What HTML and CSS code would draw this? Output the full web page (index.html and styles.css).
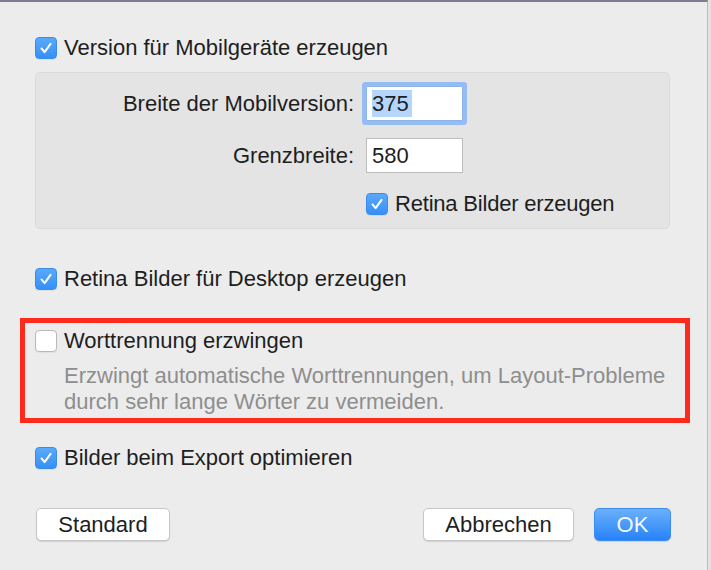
FILE: index.html
```html
<!DOCTYPE html>
<html lang="de">
<head>
  <meta charset="UTF-8" />
  <title>Exporteinstellungen</title>
  <link rel="stylesheet" href="styles.css">
</head>
<body>
  <div class="window">
    <div class="check-row">
      <span class="checkbox checked">
        <svg viewBox="0 0 22 22"><path d="M6 11.5 L9.5 15.5 L16 6.5" /></svg>
      </span>
      <span>Version für Mobilgeräte erzeugen</span>
    </div>

    <div class="group">
      <label class="field-label">Breite der Mobilversion:</label>
      <div class="textfield focused"><span class="selected">375</span></div>

      <label class="field-label">Grenzbreite:</label>
      <div class="textfield">580</div>

      <div class="check-row group-check">
        <span class="checkbox checked">
          <svg viewBox="0 0 22 22"><path d="M6 11.5 L9.5 15.5 L16 6.5" /></svg>
        </span>
        <span>Retina Bilder erzeugen</span>
      </div>
    </div>

    <div class="check-row spaced">
      <span class="checkbox checked">
        <svg viewBox="0 0 22 22"><path d="M6 11.5 L9.5 15.5 L16 6.5" /></svg>
      </span>
      <span>Retina Bilder für Desktop erzeugen</span>
    </div>

    <div class="highlight">
      <div class="check-row">
        <span class="checkbox"></span>
        <span>Worttrennung erzwingen</span>
      </div>
      <p class="hint">Erzwingt automatische Worttrennungen, um Layout-Probleme<br>durch sehr lange Wörter zu vermeiden.</p>
    </div>

    <div class="check-row after-highlight">
      <span class="checkbox checked">
        <svg viewBox="0 0 22 22"><path d="M6 11.5 L9.5 15.5 L16 6.5" /></svg>
      </span>
      <span>Bilder beim Export optimieren</span>
    </div>

    <div class="buttons">
      <button class="btn btn-standard">Standard</button>
      <div class="spacer"></div>
      <button class="btn btn-cancel">Abbrechen</button>
      <button class="btn btn-ok">OK</button>
    </div>
  </div>
</body>
</html>
```

FILE: styles.css
```css
body {
  margin: 0;
  background: #e2e2e2;
  font-family: "Liberation Sans", Arial, sans-serif;
  font-size: 22px;
  color: #1e1e1e;
}
.window {
  width: 635px;
  height: 536px;
  padding: 33px 37px 0 35px;
  background: #ececec;
  border-top: 2px solid #7e7c8f;
  border-right: 1px solid #bcbcbc;
}
.check-row {
  display: flex;
  align-items: center;
  gap: 7px;
  height: 26px;
  line-height: 26px;
  white-space: nowrap;
}
.checkbox {
  width: 22px;
  height: 22px;
  box-sizing: border-box;
  border-radius: 4px;
  background: #fff;
  border: 1px solid #b9b9b9;
  box-shadow: 0 1px 1px rgba(0,0,0,0.06);
  flex-shrink: 0;
}
.checkbox.checked {
  background: linear-gradient(#5aa9fb, #3590f6);
  border: 1px solid #3a8cec;
}
.checkbox svg {
  display: block;
  width: 20px;
  height: 20px;
  fill: none;
  stroke: #fff;
  stroke-width: 2.2;
  stroke-linecap: round;
  stroke-linejoin: round;
}
.group {
  margin-top: 11px;
  display: grid;
  grid-template-columns: 318px 97px;
  column-gap: 12px;
  row-gap: 17px;
  align-items: center;
  padding: 13px 0 11px 0;
  background: #e4e4e4;
  border: 1px solid #dadada;
  border-radius: 5px;
}
.field-label {
  text-align: right;
  white-space: nowrap;
}
.textfield {
  height: 35px;
  box-sizing: border-box;
  padding-left: 5px;
  background: #fff;
  border: 1px solid #bdbdbd;
  line-height: 33px;
}
.textfield.focused {
  border-color: #8fb3e6;
  box-shadow: 0 0 0 4px #93bdf3;
  border-radius: 1px;
}
.selected {
  display: inline-block;
  background: #b4d6fd;
  line-height: 27px;
  padding-right: 3px;
}
.group-check {
  grid-column: 2;
  margin-top: 1px;
  letter-spacing: -0.2px;
}
.spaced {
  margin-top: 37px;
}
.highlight {
  margin: 26px -20px 0 -15px;
  padding: 5px 0 3px 10px;
  border: 5px solid #fe2a1e;
}
.hint {
  margin: 9px 0 0 29px;
  line-height: 26px;
  color: #8e8e8e;
  white-space: nowrap;
}
.after-highlight {
  margin-top: 22px;
}
.buttons {
  display: flex;
  align-items: center;
  margin-top: 37px;
}
.spacer {
  flex: 1;
}
.btn {
  height: 33px;
  padding: 0;
  font-family: inherit;
  font-size: 22px;
  color: #1e1e1e;
  background: #fff;
  border: 1px solid #c6c6c6;
  border-radius: 5px;
  box-shadow: 0 1px 1px rgba(0,0,0,0.12);
}
.btn-standard {
  width: 134px;
  margin-left: 1px;
}
.btn-cancel {
  width: 151px;
}
.btn-ok {
  width: 77px;
  margin-left: 20px;
  margin-right: -1px;
  color: #f4f8ff;
  background: linear-gradient(#6bb1fb, #2782f8);
  border: 1px solid #3c8cf2;
}
```
